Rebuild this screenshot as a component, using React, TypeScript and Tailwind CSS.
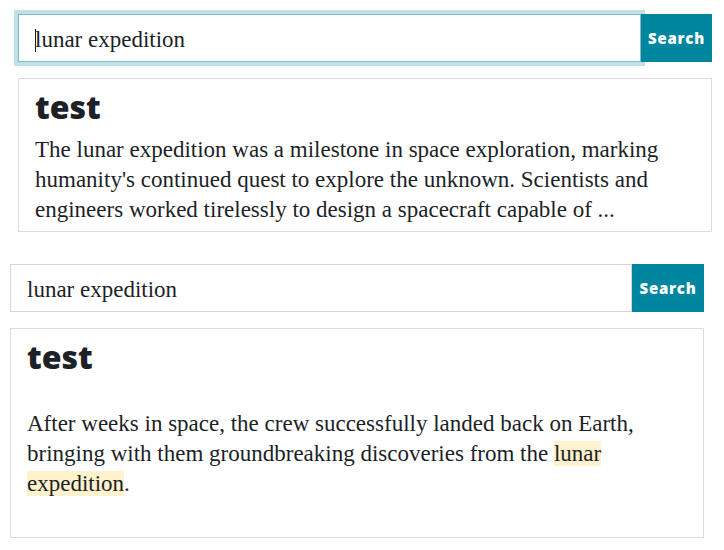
import React from "react";

const serif = "font-['Liberation_Serif',serif]";
const sans = "font-['Open_Sans',sans-serif]";

function SearchBar({ focused, btnWidth }: { focused?: boolean; btnWidth: string }) {
  return (
    <form className="flex h-12" onSubmit={(e) => e.preventDefault()}>
      <div className="relative flex-1 flex">
        <input
          type="text"
          readOnly
          value="lunar expedition"
          className={
            "w-full h-12 px-4 pt-[3px] bg-white text-[23px] text-[#1d1f27] outline-none border " +
            serif +
            (focused
              ? " border-[#7fbccb] shadow-[0_0_0_4px_#bfe0e6]"
              : " border-[#d3d6db]")
          }
        />
        {focused && (
          <span className="absolute left-[17px] top-[15px] h-[23px] w-px bg-[#1d1f27]" />
        )}
      </div>
      <button
        className={
          "relative h-12 bg-[#00869f] text-white text-[15px] font-extrabold tracking-[0.05em] " +
          sans +
          " " +
          btnWidth
        }
      >
        Search
      </button>
    </form>
  );
}

export default function App() {
  return (
    <div className="w-[724px] h-[550px] bg-white overflow-hidden text-[#1d1f27]">
      <div className="ml-[18px] w-[694px] pt-[14px]">
        <SearchBar focused btnWidth="w-[71px]" />
        <div className="mt-4 border border-[#dddddd] px-4 pt-2 pb-[6px]">
          <h2 className={"text-[32px] leading-[40px] font-extrabold text-[#1e2028] " + sans}>test</h2>
          <p className={"mt-[8px] text-[23px] leading-[30px] " + serif}>
            The lunar expedition was a milestone in space exploration, marking
            humanity's continued quest to explore the unknown. Scientists and
            engineers worked tirelessly to design a spacecraft capable of ...
          </p>
        </div>
      </div>
      <div className="ml-[10px] w-[694px] mt-8">
        <SearchBar btnWidth="w-[72px]" />
        <div className="mt-4 border border-[#dddddd] px-4 pt-2 pb-[38px]">
          <h2 className={"text-[32px] leading-[40px] font-extrabold text-[#1e2028] " + sans}>test</h2>
          <p className={"mt-[32px] text-[23px] leading-[30px] " + serif}>
            After weeks in space, the crew successfully landed back on Earth,
            bringing with them groundbreaking discoveries from the{" "}
            <mark className="bg-[#fff2cc] text-[#1d1f27]">lunar expedition</mark>.
          </p>
        </div>
      </div>
    </div>
  );
}
